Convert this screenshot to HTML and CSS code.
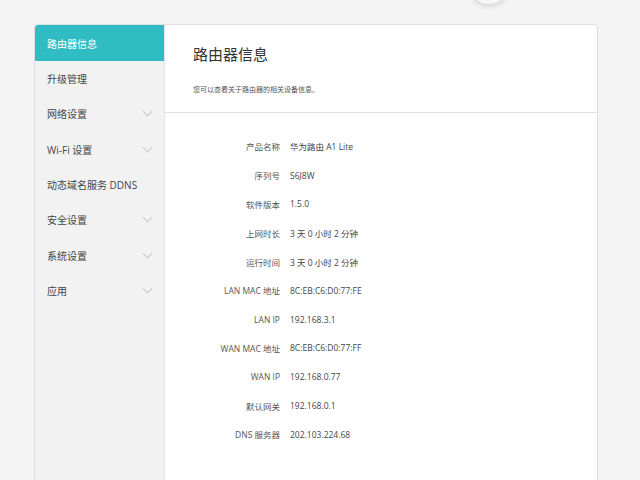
FILE: index.html
```html
<!DOCTYPE html>
<html lang="zh-CN">
<head>
<meta charset="utf-8">
<title>路由器信息</title>
<link rel="stylesheet" href="styles.css">
</head>
<body>
<div class="knob"></div>
<div class="card">
  <nav class="side">
    <div class="item active">路由器信息</div>
    <div class="item">升级管理</div>
    <div class="item">网络设置<span class="chev"></span></div>
    <div class="item">Wi-Fi 设置<span class="chev"></span></div>
    <div class="item">动态域名服务 DDNS</div>
    <div class="item">安全设置<span class="chev"></span></div>
    <div class="item">系统设置<span class="chev"></span></div>
    <div class="item">应用<span class="chev"></span></div>
  </nav>
  <main class="main">
    <header class="head">
      <h1 class="title">路由器信息</h1>
      <p class="desc">您可以查看关于路由器的相关设备信息。</p>
    </header>
    <div class="info">
      <div class="lab">产品名称</div><div class="val">华为路由 A1 Lite</div>
      <div class="lab">序列号</div><div class="val">S6J8W</div>
      <div class="lab">软件版本</div><div class="val">1.5.0</div>
      <div class="lab">上网时长</div><div class="val">3 天 0 小时 2 分钟</div>
      <div class="lab">运行时间</div><div class="val">3 天 0 小时 2 分钟</div>
      <div class="lab">LAN MAC 地址</div><div class="val">8C:EB:C6:D0:77:FE</div>
      <div class="lab">LAN IP</div><div class="val">192.168.3.1</div>
      <div class="lab">WAN MAC 地址</div><div class="val">8C:EB:C6:D0:77:FF</div>
      <div class="lab">WAN IP</div><div class="val">192.168.0.77</div>
      <div class="lab">默认网关</div><div class="val">192.168.0.1</div>
      <div class="lab">DNS 服务器</div><div class="val">202.103.224.68</div>
    </div>
  </main>
</div>
</body>
</html>
```
FILE: styles.css
```css
html, body {
  margin: 0;
  padding: 0;
  height: 100%;
  overflow: hidden;
}
body {
  background: #f4f4f4;
  font-family: "Open Sans", "Noto Sans CJK SC", sans-serif;
  color: #444;
  position: relative;
  padding-top: 24px;
  box-sizing: border-box;
}
.knob {
  position: absolute;
  left: 470px;
  top: -32px;
  width: 38px;
  height: 36px;
  border-radius: 50%;
  background: #f6f6f6;
  box-shadow: 0 1px 6px rgba(0,0,0,0.18);
}
.card {
  margin-left: 34px;
  width: 564px;
  height: 480px;
  box-sizing: border-box;
  border: 1px solid #dedede;
  border-radius: 4px;
  background: #fff;
  display: flex;
  overflow: hidden;
}
.side {
  width: 130px;
  flex: none;
  background: #f2f2f2;
  border-right: 1px solid #e2e2e2;
  box-sizing: border-box;
}
.item {
  height: 35.3px;
  display: flex;
  align-items: center;
  justify-content: space-between;
  padding: 0 12px 0 12px;
  font-size: 10px;
  color: #444;
}
.item.active {
  background: #2fbdc3;
  color: #fff;
  height: 36px;
}
.chev {
  width: 6px;
  height: 6px;
  border-right: 1px solid #c8c8c8;
  border-bottom: 1px solid #c8c8c8;
  transform: rotate(45deg);
  margin-right: 1px;
  margin-top: -4px;
}
.main {
  flex: 1;
}
.head {
  height: 88px;
  padding: 18px 0 0 28px;
  box-sizing: border-box;
  border-bottom: 1px solid #e0e0e0;
}
.title {
  margin: 0;
  font-size: 15px;
  font-weight: normal;
  color: #333;
  line-height: 22px;
}
.desc {
  margin: 19px 0 0;
  font-size: 7px;
  color: #555;
  line-height: 12px;
}
.info {
  display: grid;
  grid-template-columns: 115px 1fr;
  column-gap: 10px;
  grid-auto-rows: 28.8px;
  align-items: center;
  padding-top: 19px;
  font-size: 8.5px;
}
.lab {
  text-align: right;
  color: #555;
}
.val {
  color: #444;
}
```
